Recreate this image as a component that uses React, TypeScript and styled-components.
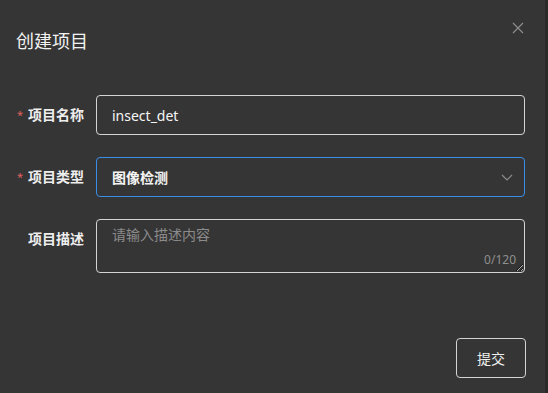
import React from "react";
import styled, { createGlobalStyle } from "styled-components";

const GlobalStyle = createGlobalStyle`
    html, body {
        margin: 0;
        padding: 0;
        background: #2a2a2a;
        font-family: "Noto Sans", "Noto Sans CJK SC", sans-serif;
    }
`;

const Page = styled.div`
    width: 548px;
    height: 393px;
    display: flex;
    overflow: hidden;
`;

const Dialog = styled.div`
    width: 545px;
    height: 393px;
    background: #353535;
    display: flex;
    flex-direction: column;
    position: relative;
    box-sizing: border-box;
`;

const Header = styled.div`
    padding: 29px 20px 0 16px;
    height: 24px;
    display: flex;
    align-items: center;
`;

const Title = styled.h2`
    margin: 0;
    font-size: 18px;
    line-height: 24px;
    font-weight: 400;
    color: #f2f2f2;
`;

const CloseButton = styled.button`
    position: absolute;
    top: 17px;
    right: 16px;
    width: 22px;
    height: 22px;
    padding: 0;
    border: none;
    background: transparent;
    display: flex;
    align-items: center;
    justify-content: center;
    cursor: pointer;
`;

const Form = styled.form`
    margin-top: 42px;
    padding: 0 20px 0 16px;
    display: flex;
    flex-direction: column;
    gap: 22px;
`;

const FormItem = styled.div<{ $top?: boolean }>`
    display: flex;
    align-items: ${(p) => (p.$top ? "flex-start" : "center")};
`;

const Label = styled.label<{ $top?: boolean }>`
    width: 80px;
    flex-shrink: 0;
    padding-right: 12px;
    box-sizing: border-box;
    text-align: right;
    font-size: 14px;
    line-height: 20px;
    font-weight: 600;
    color: #eeeeee;
    margin-top: ${(p) => (p.$top ? "10px" : "0")};
`;

const Required = styled.span`
    color: #e06060;
    margin-right: 5px;
    font-size: 11px;
    font-weight: 400;
    vertical-align: 1px;
`;

const Field = styled.div<{ $focused?: boolean }>`
    flex: 1;
    height: 40px;
    box-sizing: border-box;
    border: 1px solid ${(p) => (p.$focused ? "#3a8ee6" : "#d4d4d4")};
    border-radius: 4px;
    display: flex;
    align-items: center;
    padding: 0 11px 0 15px;
    font-size: 14px;
    color: #f5f5f5;
`;

const TextInput = styled.input`
    flex: 1;
    min-width: 0;
    background: transparent;
    border: none;
    outline: none;
    padding: 0;
    font-family: inherit;
    font-size: 14px;
    color: #f5f5f5;
`;

const SelectValue = styled.span`
    flex: 1;
    font-weight: 600;
`;

const AreaWrap = styled.div`
    flex: 1;
    position: relative;
    display: flex;
`;

const TextArea = styled.textarea`
    flex: 1;
    height: 54px;
    box-sizing: border-box;
    border: 1px solid #d4d4d4;
    border-radius: 4px;
    background: transparent;
    padding: 5px 15px;
    font-family: inherit;
    font-size: 14px;
    line-height: 20px;
    color: #f5f5f5;
    resize: vertical;
    outline: none;

    &::placeholder {
        color: #8b8b8b;
    }
`;

const Counter = styled.span`
    position: absolute;
    right: 9px;
    bottom: 5px;
    font-size: 12px;
    line-height: 16px;
    color: #8f8f8f;
`;

const Footer = styled.div`
    margin-top: auto;
    padding: 0 19px 15px 0;
    display: flex;
    justify-content: flex-end;
`;

const SubmitButton = styled.button`
    width: 70px;
    height: 40px;
    border: 1px solid #d4d4d4;
    border-radius: 4px;
    background: transparent;
    color: #f0f0f0;
    font-family: inherit;
    font-size: 14px;
    cursor: pointer;
`;

const App: React.FC = () => {
    return (
        <Page>
            <GlobalStyle />
            <Dialog>
                <Header>
                    <Title>创建项目</Title>
                </Header>
                <CloseButton type="button" aria-label="close">
                    <svg width="12" height="12" viewBox="0 0 12 12">
                        <path d="M1 1 L11 11 M11 1 L1 11" stroke="#8c8c8c" strokeWidth="1.2" />
                    </svg>
                </CloseButton>
                <Form onSubmit={(e) => e.preventDefault()}>
                    <FormItem>
                        <Label><Required>*</Required>项目名称</Label>
                        <Field>
                            <TextInput defaultValue="insect_det" />
                        </Field>
                    </FormItem>
                    <FormItem>
                        <Label><Required>*</Required>项目类型</Label>
                        <Field $focused>
                            <SelectValue>图像检测</SelectValue>
                            <svg width="12" height="12" viewBox="0 0 12 12">
                                <path d="M1 4 L6 9 L11 4" stroke="#8c8c8c" strokeWidth="1.2" fill="none" />
                            </svg>
                        </Field>
                    </FormItem>
                    <FormItem $top>
                        <Label $top>项目描述</Label>
                        <AreaWrap>
                            <TextArea placeholder="请输入描述内容" maxLength={120} />
                            <Counter>0/120</Counter>
                        </AreaWrap>
                    </FormItem>
                </Form>
                <Footer>
                    <SubmitButton type="button">提交</SubmitButton>
                </Footer>
            </Dialog>
        </Page>
    );
};

export default App;
